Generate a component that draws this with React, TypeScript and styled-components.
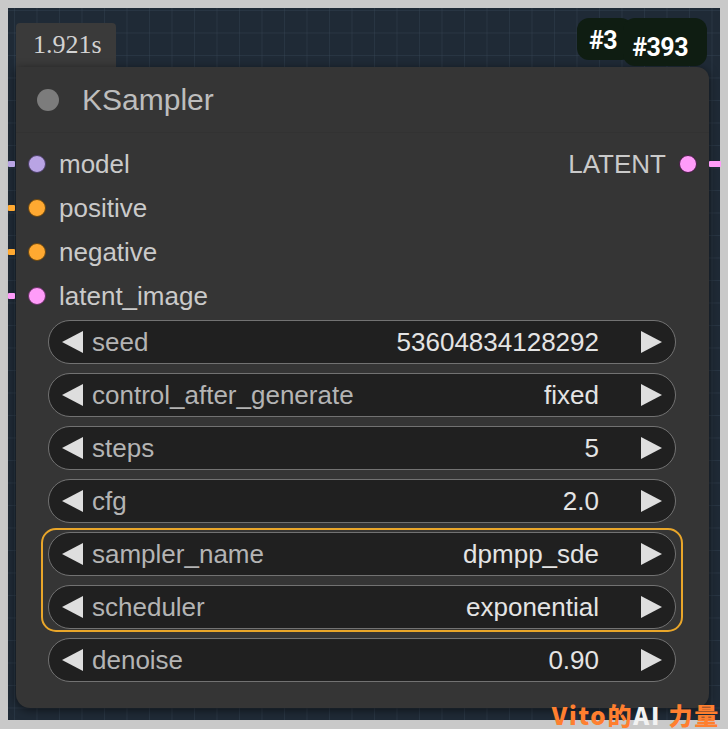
import React from "react";
import styled, { createGlobalStyle } from "styled-components";

const Global = createGlobalStyle`
  html, body { margin: 0; padding: 0; background: #c9c9c9; }
  body { font-family: "Liberation Sans", Arial, sans-serif; }
  #root { width: 728px; height: 729px; }
`;

const Frame = styled.div`
  position: relative;
  width: 728px;
  height: 729px;
  padding: 8px;
  box-sizing: border-box;
  background: #c9c9c9;
`;

const Canvas = styled.div`
  width: 712px;
  height: 712px;
  box-sizing: border-box;
  padding: 15px 11px 0 8px;
  background-color: #1f2a36;
  background-image:
    linear-gradient(to right, rgba(55, 70, 86, 0.4) 1px, transparent 1px),
    linear-gradient(to bottom, rgba(55, 70, 86, 0.4) 1px, transparent 1px);
  background-size: 22.5px 22.5px;
  background-position: 6px 2px;
`;

const NodeWrap = styled.div`
  display: flex;
  flex-direction: column;
  align-items: flex-start;
`;

const TimeTab = styled.div`
  width: 100px;
  height: 44px;
  box-sizing: border-box;
  padding: 6px 0 0 17px;
  background: #3a3a3a;
  border-radius: 4px 4px 0 0;
  font-family: "Liberation Serif", "Times New Roman", serif;
  font-size: 26px;
  line-height: 32px;
  color: #d2d2d2;
`;

const Node = styled.div`
  position: relative;
  width: 693px;
  height: 641px;
  background: #353535;
  border-radius: 0 12px 14px 14px;
  box-shadow: 0 2px 10px rgba(0, 0, 0, 0.55);
  display: flex;
  flex-direction: column;
`;

const Badge = styled.div`
  position: absolute;
  right: 2px;
  top: -49px;
  display: flex;
  align-items: flex-start;
  font-family: Roboto, "Liberation Sans", sans-serif;
  font-weight: 700;
  color: #ffffff;
`;

const Pill = styled.div<{ $h: number; $pl: number; $pr: number; $top: number }>`
  height: ${(p) => p.$h}px;
  box-sizing: border-box;
  padding: ${(p) => p.$top}px ${(p) => p.$pr}px 0 ${(p) => p.$pl}px;
  background: #0f1d12;
  border-radius: 12px;
  font-size: 25px;
  line-height: 28px;
  letter-spacing: -0.5px;
  & + & {
    margin-left: -10px;
  }
`;

const TitleBar = styled.div`
  height: 66px;
  box-sizing: border-box;
  display: flex;
  align-items: center;
  gap: 23px;
  padding-left: 21px;
  border-bottom: 1px solid #323232;
`;

const TitleDot = styled.span`
  width: 22px;
  height: 22px;
  border-radius: 50%;
  background: #7c7c7c;
`;

const Title = styled.span`
  font-size: 30px;
  color: #bdbdbd;
  line-height: 34px;
`;

const Slots = styled.div`
  padding-top: 9px;
  display: flex;
  flex-direction: column;
`;

const SlotRow = styled.div`
  height: 44px;
  display: flex;
  align-items: center;
  justify-content: space-between;
  padding: 0 12px;
`;

const Slot = styled.div<{ $out?: boolean }>`
  position: relative;
  display: flex;
  align-items: center;
  gap: 13px;
  flex-direction: ${(p) => (p.$out ? "row-reverse" : "row")};
`;

const SlotDot = styled.span<{ $c: string; $ring: string }>`
  width: 18px;
  height: 18px;
  box-sizing: border-box;
  border-radius: 50%;
  background: ${(p) => p.$c};
  border: 1.5px solid ${(p) => p.$ring};
`;

const SlotLabel = styled.span`
  font-size: 26px;
  line-height: 30px;
  color: #cacaca;
`;

const Stub = styled.span<{ $c: string; $out?: boolean }>`
  position: absolute;
  top: 50%;
  margin-top: -3px;
  height: 6px;
  width: ${(p) => (p.$out ? 12 : 7)}px;
  ${(p) => (p.$out ? "right: -24px;" : "left: -20px;")}
  background: ${(p) => p.$c};
  border-radius: 1px;
`;

const Widgets = styled.div`
  margin-top: 2px;
  padding: 0 33px 0 32px;
  display: flex;
  flex-direction: column;
  gap: 9px;
`;

const Group = styled.div`
  margin: -4px -7px -3px;
  padding: 2px 5px 1px;
  border: 2px solid #e9a62a;
  border-radius: 15px;
  display: flex;
  flex-direction: column;
  gap: 9px;
`;

const Widget = styled.div`
  height: 44px;
  box-sizing: border-box;
  border-radius: 22px;
  background: #202020;
  border: 1.5px solid #727272;
  display: flex;
  align-items: center;
  padding: 0 13px;
`;

const Arrow = styled.svg`
  width: 22px;
  height: 22px;
  flex: none;
`;

const WLabel = styled.span`
  margin-left: 8px;
  font-size: 26px;
  line-height: 30px;
  color: #b4b4b4;
  flex: 1;
  white-space: nowrap;
`;

const WValue = styled.span`
  font-size: 26px;
  line-height: 30px;
  color: #e4e4e4;
  margin-right: 41px;
  white-space: nowrap;
`;

const Watermark = styled.div`
  position: absolute;
  right: 8px;
  bottom: 2px;
  font-family: "Noto Sans CJK SC", "Liberation Sans", sans-serif;
  font-weight: 900;
  font-size: 24px;
  line-height: 25px;
  color: #ff7f2f;
  letter-spacing: 1.8px;
`;

const White = styled.span`
  color: #f2f2f2;
`;

const LeftArrow = () => (
  <Arrow viewBox="0 0 22 22">
    <polygon points="21,0 21,22 0,11" fill="#dedede" />
  </Arrow>
);

const RightArrow = () => (
  <Arrow viewBox="0 0 22 22">
    <polygon points="1,0 1,22 22,11" fill="#dedede" />
  </Arrow>
);

type W = { label: string; value: string };

const WidgetRow = ({ label, value }: W) => (
  <Widget>
    <LeftArrow />
    <WLabel>{label}</WLabel>
    <WValue>{value}</WValue>
    <RightArrow />
  </Widget>
);

const inputs = [
  { name: "model", c: "#b9a4e4", ring: "#4a3d66" },
  { name: "positive", c: "#ffa931", ring: "#6a4610" },
  { name: "negative", c: "#ffa931", ring: "#6a4610" },
  { name: "latent_image", c: "#ff9cf9", ring: "#6a2f68" },
];

export default function App() {
  return (
    <>
      <Global />
      <Frame>
        <Canvas>
          <NodeWrap>
            <TimeTab>1.921s</TimeTab>
            <Node>
              <Badge>
                <Pill $h={42} $pl={12} $pr={16} $top={9}>#3</Pill>
                <Pill $h={48} $pl={9} $pr={19} $top={16}>#393</Pill>
              </Badge>
              <TitleBar>
                <TitleDot />
                <Title>KSampler</Title>
              </TitleBar>
              <Slots>
                {inputs.map((s, i) => (
                  <SlotRow key={s.name}>
                    <Slot>
                      <Stub $c={s.c} />
                      <SlotDot $c={s.c} $ring={s.ring} />
                      <SlotLabel>{s.name}</SlotLabel>
                    </Slot>
                    {i === 0 && (
                      <Slot $out>
                        <Stub $c="#ff9cf9" $out />
                        <SlotDot $c="#ff9cf9" $ring="#4a1a48" />
                        <SlotLabel>LATENT</SlotLabel>
                      </Slot>
                    )}
                  </SlotRow>
                ))}
              </Slots>
              <Widgets>
                <WidgetRow label="seed" value="53604834128292" />
                <WidgetRow label="control_after_generate" value="fixed" />
                <WidgetRow label="steps" value="5" />
                <WidgetRow label="cfg" value="2.0" />
                <Group>
                  <WidgetRow label="sampler_name" value="dpmpp_sde" />
                  <WidgetRow label="scheduler" value="exponential" />
                </Group>
                <WidgetRow label="denoise" value="0.90" />
              </Widgets>
            </Node>
          </NodeWrap>
        </Canvas>
        <Watermark>
          Vito的<White>AI</White> 力量
        </Watermark>
      </Frame>
    </>
  );
}
